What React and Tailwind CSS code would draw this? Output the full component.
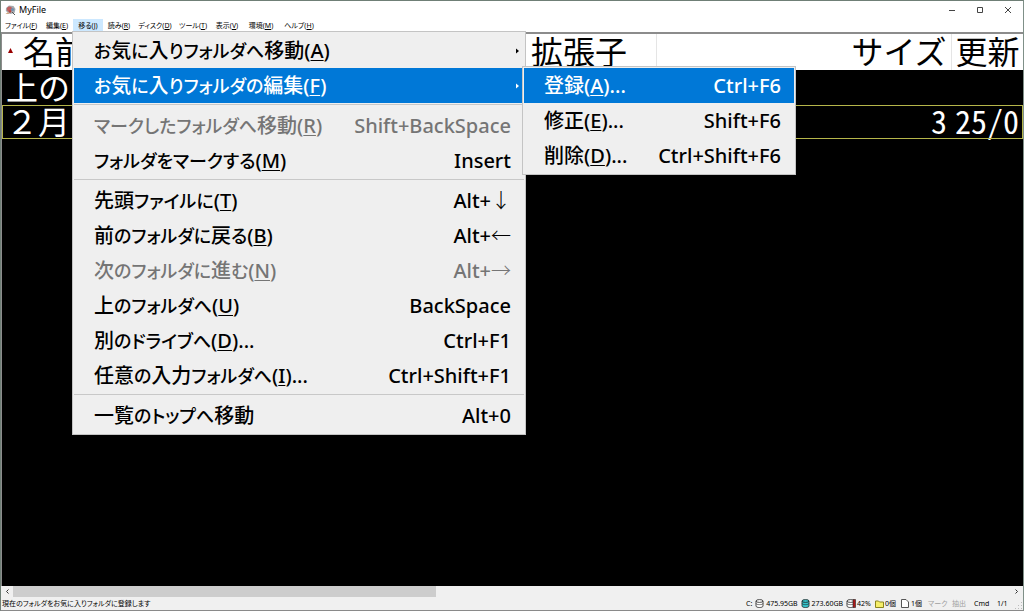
import React, { useState } from 'react';

const menuBar = [
    { label: 'ファイル', accel: 'F', width: 'w-10' },
    { label: '編集', accel: 'E', width: 'w-8' },
    { label: '移る', accel: 'J', width: 'w-[30px]' },
    { label: '読み', accel: 'R', width: 'w-8' },
    { label: 'ディスク', accel: 'D', width: 'w-10' },
    { label: 'ツール', accel: 'T', width: 'w-9' },
    { label: '表示', accel: 'V', width: 'w-8' },
    { label: '環境', accel: 'M', width: 'w-9' },
    { label: 'ヘルプ', accel: 'H', width: 'w-10' },
];

const moveMenu = [
    [
        { label: 'お気に入りフォルダへ移動', accel: 'A', arrow: true },
        { label: 'お気に入りフォルダの編集', accel: 'F', arrow: true, submenu: true },
    ],
    [
        { label: 'マークしたフォルダへ移動', accel: 'R', keys: 'Shift+BackSpace', disabled: true },
        { label: 'フォルダをマークする', accel: 'M', keys: 'Insert' },
    ],
    [
        { label: '先頭ファイルに', accel: 'T', keys: 'Alt+', dir: 'down' },
        { label: '前のフォルダに戻る', accel: 'B', keys: 'Alt+', dir: 'left' },
        { label: '次のフォルダに進む', accel: 'N', keys: 'Alt+', dir: 'right', disabled: true },
        { label: '上のフォルダへ', accel: 'U', keys: 'BackSpace' },
        { label: '別のドライブへ', accel: 'D', keys: 'Ctrl+F1', more: true },
        { label: '任意の入力フォルダへ', accel: 'I', keys: 'Ctrl+Shift+F1', more: true },
    ],
    [{ label: '一覧のトップへ移動', keys: 'Alt+0' }],
];

const favoriteMenu = [
    { label: '登録', accel: 'A', keys: 'Ctrl+F6', more: true },
    { label: '修正', accel: 'E', keys: 'Shift+F6', more: true },
    { label: '削除', accel: 'D', keys: 'Ctrl+Shift+F6', more: true },
];

const arrowChars = { down: '↓', left: '←', right: '→' };

// Kana runs are set a little smaller than kanji, as in a UI font
const splitKana = (text) => text.match(/[ぁ-ヿ]+|[^ぁ-ヿ]+/g);

const Label = ({ item }) => (
    <span>
        {splitKana(item.label).map((part, i) => (
            <span key={i} className={/^[ぁ-ヿ]/.test(part) ? 'text-lg leading-none' : ''}>
                {part}
            </span>
        ))}
        {item.accel && (
            <>
                (<span className="underline decoration-1 underline-offset-2">{item.accel}</span>)
            </>
        )}
        {item.more && '...'}
    </span>
);

const MenuItem = ({ item, active, children }) => (
    <li className="relative">
        <button
            type="button"
            disabled={item.disabled}
            className={`flex h-[35px] w-full items-center justify-between pr-[13px] pl-5 ${
                active ? 'bg-[#0078d7] text-white' : 'text-black disabled:text-[#757575]'
            }`}
        >
            <Label item={item} />
            {item.keys && (
                <span>
                    {item.keys}
                    {item.dir && <span className="font-['Noto_Sans_CJK_JP',sans-serif] font-light [font-feature-settings:normal]">{arrowChars[item.dir]}</span>}
                </span>
            )}
            {item.arrow && (
                <svg className="-mr-2 h-[6px] w-[3px]" viewBox="0 0 3 6" fill="currentColor">
                    <path d="M0 0.5 3 3 0 5.5z" />
                </svg>
            )}
        </button>
        {children}
    </li>
);

const menuBox =
    "absolute z-10 border border-[#c4c4c4] bg-[#efefef] p-px text-left text-xl font-medium whitespace-nowrap font-['Noto_Sans','Noto_Sans_CJK_JP',sans-serif]";

const MoveMenu = () => (
    <div className={`${menuBox} top-full left-0 -mt-px -ml-px w-[454px]`}>
        {moveMenu.map((group, i) => (
            <ul key={i} className={i > 0 ? 'mt-px border-t border-[#c8c8c8] pt-[3px]' : ''}>
                {group.map((item) => (
                    <MenuItem key={item.label} item={item} active={item.submenu}>
                        {item.submenu && (
                            <ul className={`${menuBox} -top-0.5 left-full -ml-0.5 w-[274px]`}>
                                {favoriteMenu.map((fav, j) => (
                                    <MenuItem key={fav.label} item={fav} active={j === 0} />
                                ))}
                            </ul>
                        )}
                    </MenuItem>
                ))}
            </ul>
        ))}
    </div>
);

const AppIcon = () => (
    <svg className="h-[11px] w-[11px]" viewBox="0 0 11 11">
        <path d="M1 3 4 .5 8.5 1l2 3L9.5 8 5 9 .8 6z" fill="#a3a9ae" />
        <circle cx="4.5" cy="4" r="2.6" fill="#c0605f" />
        <circle cx="7.5" cy="4.5" r="1.6" fill="#6f8fae" />
        <circle cx="5" cy="6.5" r="1.3" fill="#b7473f" />
        <path d="M.5 9 3 7l1.5 2z" fill="#d0a884" />
        <path d="M7 7 10 10" stroke="#555" />
    </svg>
);

const TitleBar = () => (
    <header className="flex h-[18px] items-center justify-between bg-white">
        <div className="flex items-center gap-[3px] pl-1">
            <AppIcon />
            <h1 className="text-[9px]">MyFile</h1>
        </div>
        <div className="flex pr-px text-[#444]">
            <button type="button" aria-label="最小化" className="flex h-[18px] w-7 items-center justify-center">
                <svg className="h-2 w-2" viewBox="0 0 8 8" stroke="currentColor">
                    <path d="M1 4.5h6" />
                </svg>
            </button>
            <button type="button" aria-label="最大化" className="flex h-[18px] w-7 items-center justify-center">
                <svg className="h-2 w-2" viewBox="0 0 8 8" stroke="currentColor" fill="none">
                    <path d="M1.5 1.5h5v5h-5z" />
                </svg>
            </button>
            <button type="button" aria-label="閉じる" className="flex h-[18px] w-7 items-center justify-center">
                <svg className="h-2 w-2" viewBox="0 0 8 8" stroke="currentColor">
                    <path d="M1 1l6 6M7 1 1 7" />
                </svg>
            </button>
        </div>
    </header>
);

const FileTable = () => (
    <table className="w-full table-fixed border-collapse text-[32px] leading-7 whitespace-nowrap text-white font-['Noto_Sans_CJK_JP',sans-serif] [font-feature-settings:normal]">
        <colgroup>
            <col />
            <col className="w-[129px]" />
            <col className="w-[295px]" />
            <col className="w-[72px]" />
        </colgroup>
        <thead>
            <tr className="h-9 bg-white text-left text-black">
                <th className="p-0 pb-1 font-normal">
                    <span className="flex items-center">
                        <svg className="mx-[6px] h-[5px] w-[5px]" viewBox="0 0 5 5">
                            <path d="M2.5 0 5 5H0z" fill="#900" />
                        </svg>
                        <span className="pl-1">名前</span>
                    </span>
                </th>
                <th className="border-r border-[#e5e5e5] p-0 pb-1 pl-1 font-normal">拡張子</th>
                <th className="border-r border-[#e5e5e5] p-0 pr-1 pb-1 text-right font-normal">サイズ</th>
                <th className="p-0 pb-1 pl-1 font-normal">更新</th>
            </tr>
        </thead>
        <tbody>
            <tr className="h-[35px]">
                <td className="p-0 pb-1 pl-1">上の</td>
                <td />
                <td />
                <td />
            </tr>
            <tr className="h-[34px] outline -outline-offset-1 outline-[#b5b54a]">
                <td className="p-0 pb-1 pl-1">２月</td>
                <td />
                <td className="p-0 pr-1 pb-1 text-right [font-feature-settings:'hwid']">3</td>
                <td className="p-0 pb-1 pl-1 [font-feature-settings:'hwid']">25/0</td>
            </tr>
        </tbody>
    </table>
);

const Disk = ({ color, gauge }) => (
    <svg className="h-[9px] w-[10px] shrink-0" viewBox="0 0 10 9">
        <path d="M1 2v5c0 2 7 2 7 0V2z" fill={color} stroke="#222" strokeWidth=".8" />
        <ellipse cx="4.5" cy="2" rx="3.5" ry="1.4" fill={color} stroke="#222" strokeWidth=".8" />
        <path d="M1 4.5c0 1.5 7 1.5 7 0" fill="none" stroke="#222" strokeWidth=".6" />
        {gauge && <path d="M7 .5h2.5v8H7z" fill="#b01818" stroke="#222" strokeWidth=".6" />}
    </svg>
);

const StatusBar = () => (
    <footer className="flex h-[13px] items-center justify-between bg-[#f0f0f0] pl-px text-[7px] leading-3 whitespace-nowrap">
        <span>現在のフォルダをお気に入りフォルダに登録します</span>
        <div className="flex items-center">
            <span className="flex w-[129px] items-center gap-px">
                C:&nbsp;
                <Disk color="#fff" />
                475.95GB&nbsp;
                <Disk color="#35c4cc" />
                273.60GB&nbsp;
                <Disk color="#fff" gauge />
                42%
            </span>
            <span className="flex w-[26px] items-center gap-px">
                <svg className="h-2 w-[9px] shrink-0" viewBox="0 0 9 8">
                    <path d="M.5 1h3l1 1h4v5.5h-8z" fill="#f5ee6a" stroke="#8a8420" />
                </svg>
                0個
            </span>
            <span className="flex w-[27px] items-center gap-0.5">
                <svg className="h-[9px] w-2 shrink-0" viewBox="0 0 8 9">
                    <path d="M.5.5h4.5l2.5 2.5v5.5h-7z" fill="#fff" stroke="#555" />
                </svg>
                1個
            </span>
            <span className="w-6 text-[#a0a0a0]">マーク</span>
            <span className="w-[22px] text-[#a0a0a0]">抽出</span>
            <span className="w-[23px]">Cmd</span>
            <span className="w-[18px]">1/1</span>
            <svg className="h-2 w-2 self-end" viewBox="0 0 8 8" fill="#bbb">
                <path d="M6 0h1v1H6zM6 3h1v1H6zM6 6h1v1H6zM3 3h1v1H3zM3 6h1v1H3zM0 6h1v1H0z" />
            </svg>
        </div>
    </footer>
);

const App = () => {
    const [openMenu] = useState('J');

    return (
        <div className="flex h-screen flex-col overflow-hidden border border-t-[#6f7f76] border-r-[#7f9088] border-b-[#8a8a8a] border-l-[#6f7f76] bg-white text-black font-['Noto_Sans','Noto_Sans_CJK_JP',sans-serif] [font-feature-settings:'palt']">
            <TitleBar />
            <nav className="flex h-[13px] bg-white text-[7px] leading-3">
                {menuBar.map((menu) => (
                    <div key={menu.accel} className={`relative ${menu.width}`}>
                        <button
                            type="button"
                            className={`h-[13px] w-full text-center whitespace-nowrap ${
                                openMenu === menu.accel ? 'bg-[#cce8ff]' : ''
                            }`}
                        >
                            {menu.label}(<span className="underline">{menu.accel}</span>)
                        </button>
                        {openMenu === menu.accel && menu.accel === 'J' && <MoveMenu />}
                    </div>
                ))}
            </nav>
            <main className="min-h-0 flex-1 overflow-hidden border-t-2 border-l border-[#8c8c8c] bg-black">
                <FileTable />
            </main>
            <div className="flex h-[11px] items-center bg-[#f0f0f0]">
                <button type="button" aria-label="左へ" className="flex w-3 justify-center">
                    <svg className="h-[5px] w-1" viewBox="0 0 4 5" fill="none" stroke="#333">
                        <path d="M3.5.5l-2 2 2 2" />
                    </svg>
                </button>
                <div className="flex h-full flex-1">
                    <div className="w-[42.4%] bg-[#cdcdcd]" />
                </div>
                <button type="button" aria-label="右へ" className="flex w-3 justify-center">
                    <svg className="h-[5px] w-1" viewBox="0 0 4 5" fill="none" stroke="#333">
                        <path d="M.5.5l2 2-2 2" />
                    </svg>
                </button>
            </div>
            <StatusBar />
        </div>
    );
};

export default App;
